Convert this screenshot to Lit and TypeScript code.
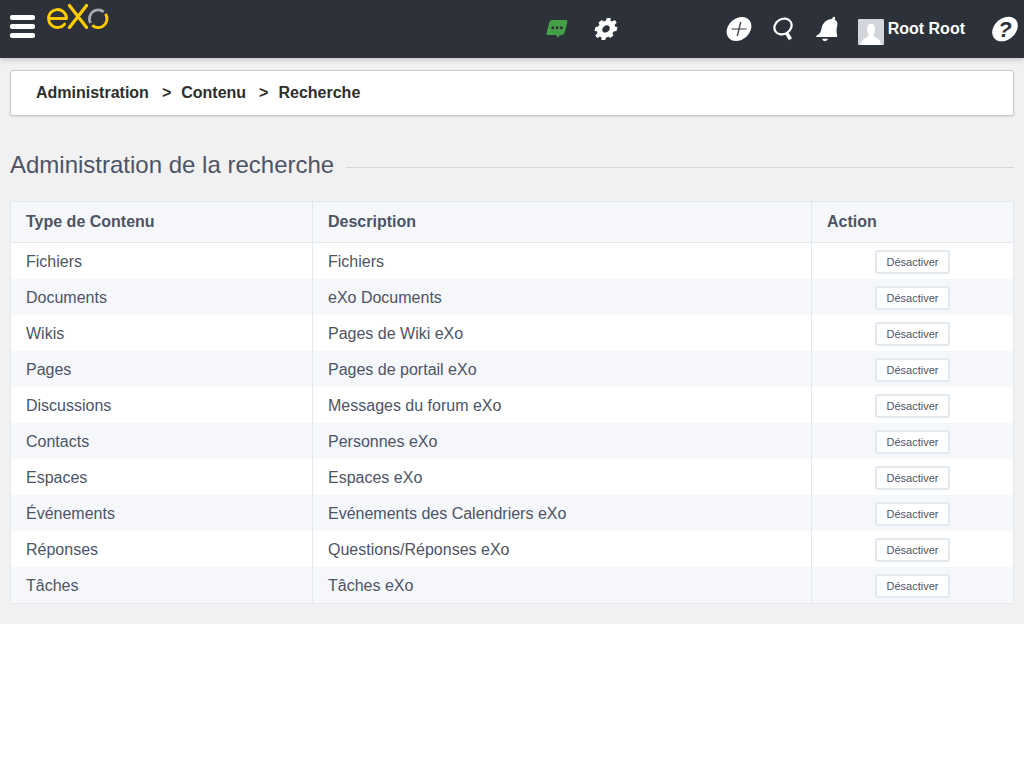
import { LitElement, html, css } from "lit";
import { customElement } from "lit/decorators.js";

interface ContentType {
  type: string;
  description: string;
}

const CONTENT_TYPES: ContentType[] = [
  { type: "Fichiers", description: "Fichiers" },
  { type: "Documents", description: "eXo Documents" },
  { type: "Wikis", description: "Pages de Wiki eXo" },
  { type: "Pages", description: "Pages de portail eXo" },
  { type: "Discussions", description: "Messages du forum eXo" },
  { type: "Contacts", description: "Personnes eXo" },
  { type: "Espaces", description: "Espaces eXo" },
  { type: "Événements", description: "Evénements des Calendriers eXo" },
  { type: "Réponses", description: "Questions/Réponses eXo" },
  { type: "Tâches", description: "Tâches eXo" },
];

@customElement("top-bar")
class TopBar extends LitElement {
  static styles = css`
    :host {
      display: block;
      position: relative;
    }
    .bar {
      display: flex;
      align-items: center;
      height: 58px;
      padding: 0 5px 0 10px;
      background: #2d3139;
      box-shadow: 0 1px 6px rgba(0, 0, 0, 0.25);
      box-sizing: border-box;
    }
    button {
      display: block;
      padding: 0;
      border: 0;
      background: none;
      color: #fff;
      font: inherit;
      cursor: pointer;
    }
    svg {
      display: block;
    }
    .menu {
      display: flex;
      flex-direction: column;
      gap: 4px;
      width: 25px;
      margin-top: -6px;
    }
    .menu span {
      height: 5px;
      border-radius: 2px;
      background: #fff;
    }
    .logo {
      align-self: flex-start;
      margin: 2px 0 0 11px;
    }
    .middle {
      display: flex;
      align-items: center;
      gap: 26px;
      margin: 0 108px 0 auto;
    }
    .right {
      display: flex;
      align-items: center;
    }
    .search,
    .bell {
      margin-left: 21px;
    }
    .user {
      display: flex;
      align-items: center;
      gap: 4px;
      margin: 0 26px 0 20px;
      color: #fff;
      font-weight: bold;
      font-size: 16px;
      line-height: 20px;
      text-decoration: none;
    }
    .user svg {
      margin-top: 6px;
    }
  `;

  render() {
    return html`
      <header class="bar">
        <button class="menu" aria-label="Menu"><span></span><span></span><span></span></button>
        <a class="logo" href="#" aria-label="eXo">
          <svg width="64" height="30" viewBox="46 2 64 30" fill="none" stroke="#fc0" stroke-width="2.9">
            <circle cx="57.5" cy="18.5" r="9" pathLength="360" stroke-dasharray="322 38" transform="rotate(38 57.5 18.5)" stroke-linecap="round" />
            <line x1="49" y1="18.5" x2="67" y2="18.5" />
            <line x1="69.4" y1="5.5" x2="86.6" y2="27.4" stroke-width="3.2" stroke-linecap="round" />
            <line x1="86.6" y1="5.5" x2="69.4" y2="27.4" stroke-width="3.2" stroke-linecap="round" />
            <circle cx="98.2" cy="18.8" r="8.8" pathLength="360" stroke="#a6a9ae" stroke-dasharray="158 202" transform="rotate(151 98.2 18.8)" />
            <circle cx="98.2" cy="18.8" r="8.8" pathLength="360" stroke-dasharray="166 194" transform="rotate(-34 98.2 18.8)" />
          </svg>
        </a>
        <div class="middle">
          <button aria-label="Discussion">
            <svg width="22" height="20" viewBox="0 0 22 20">
              <path fill="#43a047" d="M6.500 1h13q2.300 0 1.800 2.200l-2.700 10.600q-.6 2.300-2.900 2.300h-2.200l-.7 3-3.200-3H2.200Q0 16.100.500 13.900L3.400 3.200Q4 1 6.500 1Z" />
              <g fill="#2d3139"><circle cx="6.800" cy="8.700" r="1.500" /><circle cx="11.100" cy="8.700" r="1.500" /><circle cx="15.400" cy="8.700" r="1.500" /></g>
            </svg>
          </button>
          <button aria-label="Paramètres">
            <svg width="24" height="24" viewBox="-12 -12 24 24">
              <g transform="skewX(-14)" fill="#fff">
                <circle r="6.200" fill="none" stroke="#fff" stroke-width="5" />
                ${[0, 45, 90, 135].map(
                  (turn) => html`<svg x="-12" y="-12" width="24" height="24" viewBox="-12 -12 24 24" overflow="visible">
                    <g transform="rotate(${turn})"><path fill="#fff" d="M-2.400-7.500-1.900-11H1.900L2.400-7.500ZM-2.400 7.500-1.900 11H1.900L2.400 7.500Z" /></g>
                  </svg>`
                )}
              </g>
            </svg>
          </button>
        </div>
        <div class="right">
          <button aria-label="Créer">
            <svg width="26" height="26" viewBox="-13 -13 26 26">
              <circle r="12" fill="#fff" transform="skewX(-14)" />
              <path d="M-7.500 0H7.500" stroke="#999c9f" stroke-width="2" />
              <path d="M1.700-7-1.700 7" stroke="#4b4f55" stroke-width="1.500" />
            </svg>
          </button>
          <button class="search" aria-label="Rechercher">
            <svg width="22" height="24" viewBox="0 0 22 24" fill="none" stroke="#fff">
              <ellipse cx="10" cy="9.500" rx="9" ry="7.500" stroke-width="2.200" transform="rotate(-32 10 9.500)" />
              <path d="M13.300 15.500 17.500 22.300" stroke-width="3.600" />
            </svg>
          </button>
          <button class="bell" aria-label="Notifications">
            <svg width="22" height="26" viewBox="0 0 22 26" fill="#fff">
              <path d="M16.200 2.800Q17-.2 18.700 1q1 .8-.1 2.500Q22.200 5 21.300 9.200C20.500 13 20.200 15.500 21 18.500L21.200 21H0Q.3 19.300 2.500 18.300 4.700 17 5.500 12.500 7 4 16.200 2.800ZM6.200 22.800H12.200Q11 25.200 8.800 25.200 6.500 25.200 6.200 22.800Z" />
            </svg>
          </button>
          <a class="user" href="#">
            <svg width="26" height="26" viewBox="0 0 26 26">
              <rect width="26" height="26" rx="1" fill="#d2d5d9" />
              <path fill="#fff" d="M13 5c3 0 4 2 4 5 0 2.500-.7 4-1.300 5v2.300c1 1.500 6.800 1.700 7.500 8.700H2.800c.7-7 6.500-7.200 7.500-8.700V15C9.700 14 9 12.500 9 10c0-3 1-5 4-5Z" />
            </svg>
            <span>Root Root</span>
          </a>
          <button aria-label="Aide">
            <svg width="28" height="26" viewBox="-14 -13 28 26">
              <circle r="12.300" fill="#fff" transform="skewX(-16)" />
              <text x="0" y="8" text-anchor="middle" fill="#2d3139" font-family="Liberation Sans, Arial, sans-serif" font-weight="bold" font-style="italic" font-size="22">?</text>
            </svg>
          </button>
        </div>
      </header>
    `;
  }
}

@customElement("app-root")
class AppRoot extends LitElement {
  static styles = css`
    :host {
      display: block;
      min-height: 100vh;
      background: #fff;
      color: #4d5466;
      font-family: "Liberation Sans", Arial, sans-serif;
      font-size: 16px;
      line-height: 20px;
    }
    .page {
      padding-bottom: 20px;
      background: #f1f1f1;
    }
    main {
      padding: 12px 10px 0;
    }
    .crumbs {
      display: flex;
      padding: 12px 25px;
      border: 1px solid #c9c9c9;
      border-radius: 3px;
      background: #fff;
      box-shadow: 0 1px 2px rgba(0, 0, 0, 0.1);
      color: #2e2e2e;
      font-weight: bold;
    }
    .crumbs a {
      color: inherit;
      text-decoration: none;
    }
    .sep {
      margin: 0 10px 0 13px;
    }
    .title {
      display: flex;
      align-items: center;
      gap: 12px;
      margin: 34px 0 21px;
      font-weight: normal;
      font-size: 24px;
      line-height: 30px;
    }
    .title::after {
      content: "";
      flex: 1;
      margin-top: 4px;
      border-top: 1px solid #d9d9d9;
    }
    table {
      width: 100%;
      table-layout: fixed;
      border: 1px solid #e1e8ee;
      border-spacing: 0;
      background: #fff;
    }
    .type {
      width: 302px;
    }
    .action {
      width: 201px;
    }
    th,
    td {
      box-sizing: border-box;
      padding: 0 15px;
      border-right: 1px solid #e1e8ee;
      text-align: left;
    }
    th:last-child,
    td:last-child {
      border-right: 0;
    }
    th {
      height: 41px;
      border-bottom: 1px solid #e1e8ee;
      background: #f5f7fa;
    }
    td {
      height: 36px;
      padding-top: 2px;
    }
    tbody tr:nth-child(even) {
      background: #f5f7fb;
    }
    .toggle {
      display: block;
      height: 24px;
      margin: 0 auto;
      padding: 0 10px;
      border: 2px solid #e1e8ee;
      border-radius: 3px;
      background: #fff;
      color: #4d5466;
      font: 11px/20px "Liberation Sans", Arial, sans-serif;
      cursor: pointer;
    }
  `;

  render() {
    return html`
      <div class="page">
        <top-bar></top-bar>
        <main>
          <nav class="crumbs" aria-label="Fil d'Ariane">
            <a href="#">Administration</a><span class="sep">&gt;</span><a href="#">Contenu</a
            ><span class="sep">&gt;</span><a href="#">Recherche</a>
          </nav>
          <h1 class="title">Administration de la recherche</h1>
          <table>
            <colgroup>
              <col class="type" />
              <col />
              <col class="action" />
            </colgroup>
            <thead>
              <tr>
                <th scope="col">Type de Contenu</th>
                <th scope="col">Description</th>
                <th scope="col">Action</th>
              </tr>
            </thead>
            <tbody>
              ${CONTENT_TYPES.map(
                (item) => html`<tr>
                  <td>${item.type}</td>
                  <td>${item.description}</td>
                  <td><button class="toggle">Désactiver</button></td>
                </tr>`
              )}
            </tbody>
          </table>
        </main>
      </div>
    `;
  }
}
